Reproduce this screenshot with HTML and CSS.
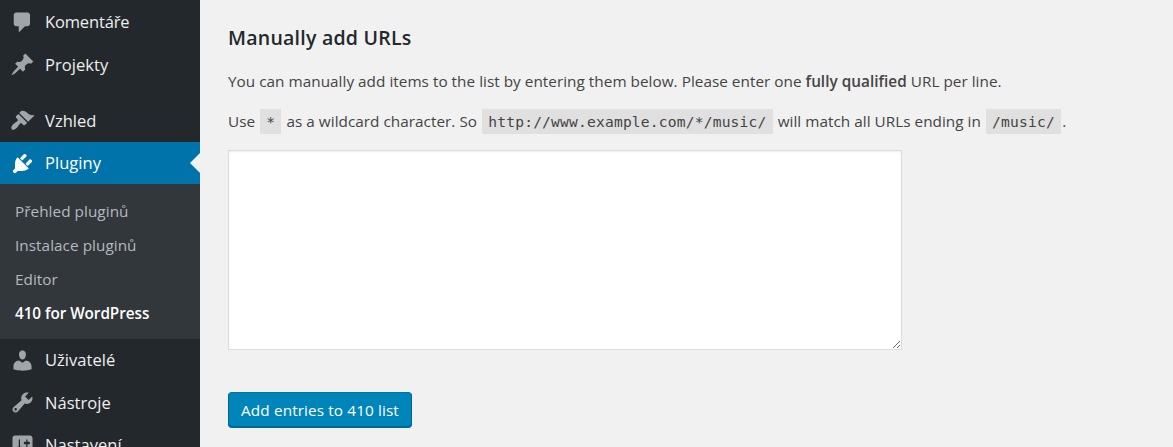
FILE: index.html
```html
<!DOCTYPE html>
<html lang="cs">
<head>
<meta charset="utf-8">
<title>410 for WordPress</title>
<link rel="stylesheet" href="styles.css">
</head>
<body>
<div class="admin">
  <nav class="menu">
    <a class="item"><svg class="icon" viewBox="0 0 20 20"><path d="M5 2h9c1.1 0 2 .9 2 2v7c0 1.1-.9 2-2 2h-2l-5 5v-5H5c-1.1 0-2-.9-2-2V4c0-1.1.9-2 2-2z"/></svg><span>Komentáře</span></a>
    <a class="item"><svg class="icon" viewBox="0 0 20 20"><path d="M10.44 3.02l1.82-1.82 6.36 6.35-1.83 1.82c-1.05-.68-2.48-.57-3.41.36l-.75.75c-.92.93-1.04 2.35-.35 3.41l-1.83 1.82-2.41-2.41-2.8 2.79c-.42.42-3.38 2.71-3.8 2.29s1.86-3.39 2.28-3.81l2.79-2.79L4.1 9.36l1.83-1.82c1.05.69 2.48.57 3.4-.36l.75-.75c.93-.92 1.05-2.35.36-3.41z"/></svg><span class="wide">Projekty</span></a>
    <div class="separator"></div>
    <a class="item"><svg class="icon" viewBox="0 0 20 20"><path d="M14.48 11.06L7.41 3.99l1.5-1.5c.5-.56 2.3-.47 3.51.32 1.21.8 1.43 1.28 2.91 2.1 1.18.64 2.45 1.26 4.45.85zm-.71.71L6.7 4.7 4.93 6.47c-.39.39-.39 1.02 0 1.41l1.06 1.06c.39.39.39 1.03 0 1.42-.6.6-1.43 1.11-2.21 1.69-.35.26-.7.53-1.01.84C1.43 14.23.4 16.08 1.4 17.07c.99 1 2.84-.03 4.18-1.36.31-.31.58-.66.85-1.02.57-.78 1.08-1.61 1.69-2.21.39-.39 1.02-.39 1.41 0l1.06 1.06c.39.39 1.02.39 1.41 0z"/></svg><span class="wide">Vzhled</span></a>
    <a class="item current"><svg class="icon" viewBox="0 0 20 20"><path d="M13.11 4.36L9.87 7.6 8 5.73l3.24-3.24c.35-.34 1.05-.2 1.56.32.52.51.66 1.21.31 1.55zm-8 1.77l.91-1.12 9.01 9.01-1.19.84c-.71.71-2.63 1.16-3.82 1.16H6.14L4.9 17.26c-.59.59-1.54.59-2.12 0-.59-.58-.59-1.53 0-2.12l1.24-1.24v-3.88c0-1.13.4-3.19 1.09-3.89zm7.26 3.97l3.24-3.24c.34-.35 1.04-.21 1.55.31.52.51.66 1.21.31 1.55l-3.24 3.25z"/></svg><span class="wide">Pluginy</span></a>
    <div class="submenu">
      <a class="subitem">Přehled pluginů</a>
      <a class="subitem">Instalace pluginů</a>
      <a class="subitem">Editor</a>
      <a class="subitem active">410 for WordPress</a>
    </div>
    <a class="item"><svg class="icon" viewBox="0 0 20 20"><path d="M10 9.25c-2.27 0-2.73-3.44-2.73-3.44C7 4.02 7.82 2 9.97 2c2.16 0 2.98 2.02 2.71 3.81 0 0-.41 3.44-2.68 3.44zm0 2.57L12.72 10c2.39 0 4.52 2.33 4.52 4.53v2.49s-3.65 1.13-7.24 1.13c-3.65 0-7.24-1.13-7.24-1.13v-2.49c0-2.25 1.94-4.48 4.47-4.48z"/></svg><span class="wide">Uživatelé</span></a>
    <a class="item"><svg class="icon" viewBox="0 0 20 20"><path d="M16.68 9.77c-1.34 1.34-3.3 1.67-4.95.99l-5.41 6.52c-.99.99-2.59.99-3.58 0s-.99-2.59 0-3.57l6.52-5.42c-.68-1.65-.35-3.61.99-4.95 1.28-1.28 3.12-1.62 4.72-1.06l-2.89 2.89 2.82 2.82 2.86-2.87c.53 1.58.18 3.39-1.08 4.65zM3.81 16.21c.4.39 1.04.39 1.43 0 .4-.4.4-1.04 0-1.43-.39-.4-1.03-.4-1.43 0-.39.39-.39 1.03 0 1.43z"/></svg><span class="wide">Nástroje</span></a>
    <a class="item"><svg class="icon" viewBox="0 0 20 20"><path d="M18 16V4c0-1.1-.9-2-2-2H4c-1.1 0-2 .9-2 2v12c0 1.1.9 2 2 2h12c1.1 0 2-.9 2-2zM8 11h1c.55 0 1 .45 1 1s-.45 1-1 1H8v1.5c0 .28-.22.5-.5.5s-.5-.22-.5-.5V13H6c-.55 0-1-.45-1-1s.45-1 1-1h1V5.5c0-.28.22-.5.5-.5s.5.22.5.5V11zm5-2h-1c-.55 0-1-.45-1-1s.45-1 1-1h1V5.5c0-.28.22-.5.5-.5s.5.22.5.5V7h1c.55 0 1 .45 1 1s-.45 1-1 1h-1v5.5c0 .28-.22.5-.5.5s-.5-.22-.5-.5V9z"/></svg><span class="wide">Nastavení</span></a>
  </nav>
  <main class="content">
    <h3 class="title">Manually add URLs</h3>
    <p class="text intro">You can manually add items to the list by entering them below. Please enter one <strong>fully qualified</strong> URL per line.</p>
    <p class="text hint">Use <code>*</code> as a wildcard character. So <code>http://www.example.com/*/music/</code> will match all URLs ending in <code>/music/</code>.</p>
    <textarea class="urls"></textarea>
    <button class="submit">Add entries to 410 list</button>
  </main>
</div>
</body>
</html>
```
FILE: styles.css
```css
* { box-sizing: border-box; }
body {
  margin: 0;
  height: 447px;
  overflow: hidden;
  background: #f1f1f1;
  color: #444;
  font-family: "Open Sans", "Noto Sans", sans-serif;
}
.admin { display: flex; height: 447px; overflow: hidden; }
.menu {
  flex: none;
  display: flex;
  flex-direction: column;
  width: 200px;
  padding-top: 1px;
  background: #23282d;
}
.item {
  position: relative;
  flex: none;
  display: flex;
  align-items: center;
  gap: 10px;
  height: 42.5px;
  padding-left: 10px;
  color: #eee;
  font-size: 16.5px;
  line-height: 24px;
  letter-spacing: -0.15px;
}
.wide { letter-spacing: 0.05px; }
.icon { flex: none; width: 25px; height: 25px; fill: #a0a5aa; }
.separator { flex: none; height: 13.5px; }
.current { height: 42px; background: #0073aa; color: #fff; }
.current .icon { fill: #fff; }
.current::after {
  content: "";
  position: absolute;
  right: 0;
  top: 11px;
  border: 10px solid transparent;
  border-left: 0;
  border-right-color: #f1f1f1;
}
.submenu { flex: none; height: 155px; padding-top: 10px; background: #32373c; }
.subitem {
  display: block;
  height: 34px;
  padding-left: 15px;
  color: #b4b9be;
  font-size: 15.3px;
  line-height: 34px;
  letter-spacing: 0.05px;
}
.active { color: #fff; font-weight: 600; letter-spacing: -0.06px; }
.content {
  flex: 1;
  display: flex;
  flex-direction: column;
  align-items: flex-start;
  padding: 24px 0 0 28px;
}
.title { margin: 0; color: #23282d; font-size: 19.5px; font-weight: 600; line-height: 28px; letter-spacing: 0.24px; }
.text { margin: 0; font-size: 15.3px; line-height: 24px; letter-spacing: 0.03px; white-space: nowrap; }
.intro { margin-top: 17px; }
.hint { margin-top: 16px; }
.text strong { font-weight: 600; }
.text code {
  margin: 0 1px;
  padding: 4px 6.2px;
  background: #e0e0e0;
  font-family: "DejaVu Sans Mono", monospace;
  font-size: 14.6px;
  letter-spacing: 0.19px;
}
.urls {
  width: 674px;
  height: 200px;
  margin-top: 16px;
  border: 1px solid #ddd;
  outline: 0;
  background: #fff;
  box-shadow: inset 0 1px 2px rgba(0, 0, 0, 0.07);
}
.submit {
  height: 35px;
  width: 184px;
  margin-top: 42px;
  padding: 0;
  border: 1px solid #006799;
  border-color: #0073aa #006799 #006799;
  border-radius: 4px;
  background: #0085ba;
  box-shadow: 0 1px 0 #006799;
  color: #fff;
  font-family: inherit;
  font-size: 15.3px;
  letter-spacing: 0.12px;
  white-space: nowrap;
}
```
